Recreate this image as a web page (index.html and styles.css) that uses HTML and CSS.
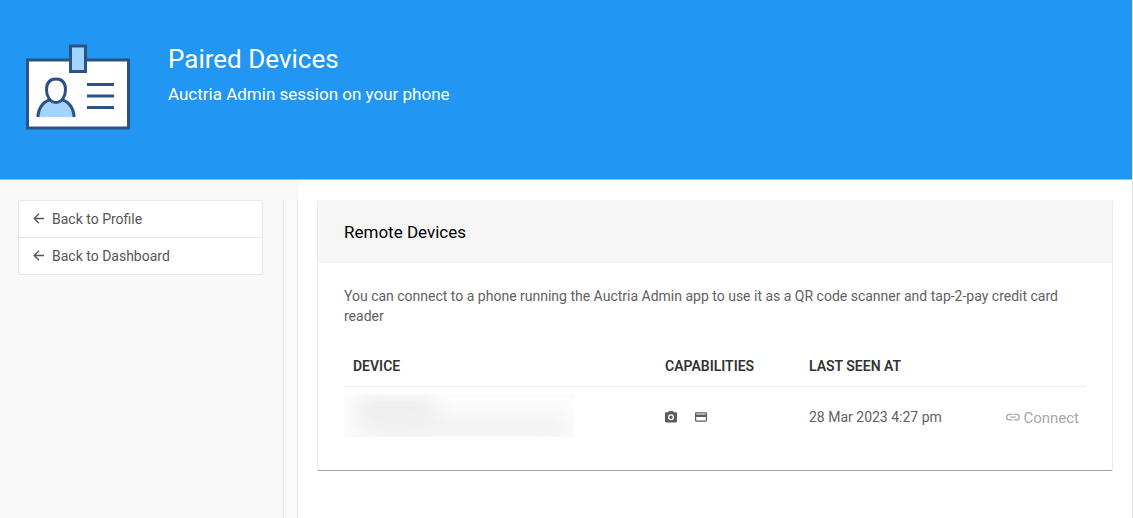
FILE: index.html
```html
<!DOCTYPE html>
<html lang="en">
<head>
<meta charset="utf-8">
<title>Paired Devices</title>
<link rel="stylesheet" href="styles.css">
</head>
<body>
<div class="page">
  <header class="hero">
    <svg class="hero-icon" viewBox="0 0 104 86" aria-hidden="true">
      <rect x="1.500" y="16" width="101" height="68" fill="#fff" stroke="#2b5286" stroke-width="3"/>
      <rect x="44.500" y="2" width="15" height="25.500" fill="#a3d3ff" stroke="#2b5286" stroke-width="3"/>
      <path d="M12 73C12 64 18 57 24 56Q30 61 36 56C42 57 48 64 48 73Z" fill="#a3d3ff"/>
      <path d="M12 73C12 64 18 57 24 56M36 56C42 57 48 64 48 73" fill="none" stroke="#2b5286" stroke-width="3"/>
      <path d="M30 35C23 35 20.500 40 20.500 46C20.500 52 24 58.500 30 58.500S39.500 52 39.500 46C39.500 40 37 35 30 35Z" fill="#fff" stroke="#2b5286" stroke-width="3"/>
      <path d="M61 40.500H88M61 52H88M61 63.500H88" stroke="#2b5286" stroke-width="3"/>
    </svg>
    <div class="hero-text">
      <h1 class="hero-title">Paired Devices</h1>
      <p class="hero-subtitle">Auctria Admin session on your phone</p>
    </div>
  </header>
  <div class="layout">
    <aside class="sidebar">
      <nav class="side-nav">
        <a class="side-link" href="#profile"><svg class="arrow" viewBox="0 0 12 13" aria-hidden="true"><path d="M11 5.500H1.500M6 .8L1.200 5.500L6 10.200"/></svg>Back to Profile</a>
        <a class="side-link" href="#dashboard"><svg class="arrow" viewBox="0 0 12 13" aria-hidden="true"><path d="M11 5.500H1.500M6 .8L1.200 5.500L6 10.200"/></svg>Back to Dashboard</a>
      </nav>
      <div class="gutter"></div>
    </aside>
    <main class="content">
      <section class="card">
        <h2 class="card-title">Remote Devices</h2>
        <div class="card-body">
          <p class="intro">You can connect to a phone running the Auctria Admin app to use it as a QR code scanner and tap-2-pay credit card reader</p>
          <table class="devices">
            <thead>
              <tr><th class="col-device">Device</th><th class="col-cap">Capabilities</th><th class="col-seen">Last seen at</th><th class="col-action"></th></tr>
            </thead>
            <tbody>
              <tr>
                <td class="device-cell"><div class="redacted"><div class="smudge smudge-name"></div><div class="smudge smudge-detail"></div></div></td>
                <td><div class="caps">
                  <svg class="cap-icon" viewBox="2 2 20 20" role="img" aria-label="Camera"><path fill-rule="evenodd" d="M9 2L7.170 4H4C2.900 4 2 4.900 2 6V19C2 20.100 2.900 21 4 21H20C21.100 21 22 20.100 22 19V6C22 4.900 21.100 4 20 4H16.830L15 2ZM12 17.500A5 5 0 1 1 12 7.500A5 5 0 1 1 12 17.500ZM12 15.300A2.800 2.800 0 1 0 12 9.700A2.800 2.800 0 1 0 12 15.300Z"/></svg>
                  <svg class="cap-icon" viewBox="2 2 20 20" role="img" aria-label="Credit card"><path fill-rule="evenodd" d="M20 4H4C2.900 4 2 4.900 2 6V18C2 19.100 2.900 20 4 20H20C21.100 20 22 19.100 22 18V6C22 4.900 21.100 4 20 4ZM20 18H4V12H20ZM20 8H4V6H20Z"/></svg>
                </div></td>
                <td>28 Mar 2023 4:27 pm</td>
                <td class="action"><button class="connect" type="button" disabled><svg class="link-icon" viewBox="2 6 20 13" aria-hidden="true"><path d="M3.900 12C3.900 10.290 5.290 8.900 7 8.900H11V7H7A5 5 0 0 0 7 17H11V15.100H7C5.290 15.100 3.900 13.710 3.900 12ZM8 13H16V11H8ZM17 7H13V8.900H17A3.100 3.100 0 0 1 17 15.100H13V17H17A5 5 0 0 0 17 7Z"/></svg>Connect</button></td>
              </tr>
            </tbody>
          </table>
        </div>
      </section>
    </main>
  </div>
</div>
</body>
</html>
```
FILE: styles.css
```css
* { box-sizing: border-box; }

body {
  margin: 0;
  background: #fff;
  color: #616161;
  font-family: Roboto, sans-serif;
  font-size: 14px;
  line-height: 20px;
}

.page {
  display: flex;
  flex-direction: column;
  min-height: 100vh;
  border-right: 1px solid #e0e0e0;
}

.hero {
  display: flex;
  gap: 38px;
  min-height: 180px;
  padding: 44px 26px;
  background: #2196f3;
  border-bottom: 1px solid #b4bcc4;
  color: #fff;
}

.hero-icon { width: 104px; height: 86px; flex: none; }
.hero-title { margin: 0; font-size: 26px; font-weight: 400; line-height: 30px; }
.hero-subtitle { margin: 10px 0 0; font-size: 17px; line-height: 20px; }

.layout { display: flex; flex: 1; }

.sidebar {
  display: flex;
  width: 298px;
  flex: none;
  padding: 20px 0 0 18px;
  gap: 20px;
  background: #f8f8f8;
}

.side-nav {
  align-self: flex-start;
  flex: 1;
  background: #fff;
  border: 1px solid #e7e7e7;
  border-radius: 2px;
}

.side-link {
  display: flex;
  align-items: center;
  gap: 7px;
  height: 36px;
  padding: 0 14px;
  color: #555;
  text-decoration: none;
}

.side-link + .side-link { height: 37px; border-top: 1px solid #e7e7e7; }

.arrow { width: 12px; height: 13px; fill: none; stroke: #555; stroke-width: 1.3; }

.gutter {
  width: 15px;
  background: #fafafa;
  border: solid #e7e7e7;
  border-width: 0 1px;
}

.content { flex: 1; min-width: 0; padding: 20px 19px; }

.card {
  border: 1px solid #e9e9e9;
  border-top: 0;
  border-bottom-color: #9e9e9e;
  border-radius: 2px;
}

.card-title {
  margin: 0;
  padding: 21px 26px 20px;
  background: #f6f6f6;
  color: #000;
  font-size: 17px;
  font-weight: 400;
  line-height: 22px;
}

.card-body { padding: 23px 26px 22px; }
.intro { margin: 0; }

.devices {
  width: 100%;
  margin-top: 20px;
  border-collapse: collapse;
  table-layout: fixed;
}

.devices th {
  height: 40px;
  padding: 0 9px;
  border-bottom: 1px solid #eee;
  color: #333;
  font-weight: 600;
  text-align: left;
  text-transform: uppercase;
}

.devices td { height: 62px; padding: 0 9px; }
.devices td.device-cell { padding: 7px 0 0; vertical-align: top; }
.devices td.action { padding: 0 7px; text-align: right; }

.col-device { width: 312px; }
.col-cap { width: 144px; }
.col-seen { width: 178px; }

.redacted {
  display: flex;
  flex-direction: column;
  justify-content: space-between;
  width: 230px;
  height: 43px;
  padding: 8px 8px 2px 16px;
  overflow: hidden;
  background: #fcfcfc;
}

.smudge { height: 16px; filter: blur(10px); }
.smudge-name { width: 74px; background: #e5e5e5; }
.smudge-detail { background: #ededed; }

.caps { display: flex; gap: 18px; }
.cap-icon { width: 12px; height: 12px; fill: #5c5c5c; }

.connect {
  display: inline-flex;
  align-items: center;
  gap: 3px;
  padding: 0;
  border: 0;
  background: none;
  color: #a8a8a8;
  font: inherit;
  font-size: 15px;
}

.link-icon { width: 14px; height: 9px; fill: #a8a8a8; }
```
